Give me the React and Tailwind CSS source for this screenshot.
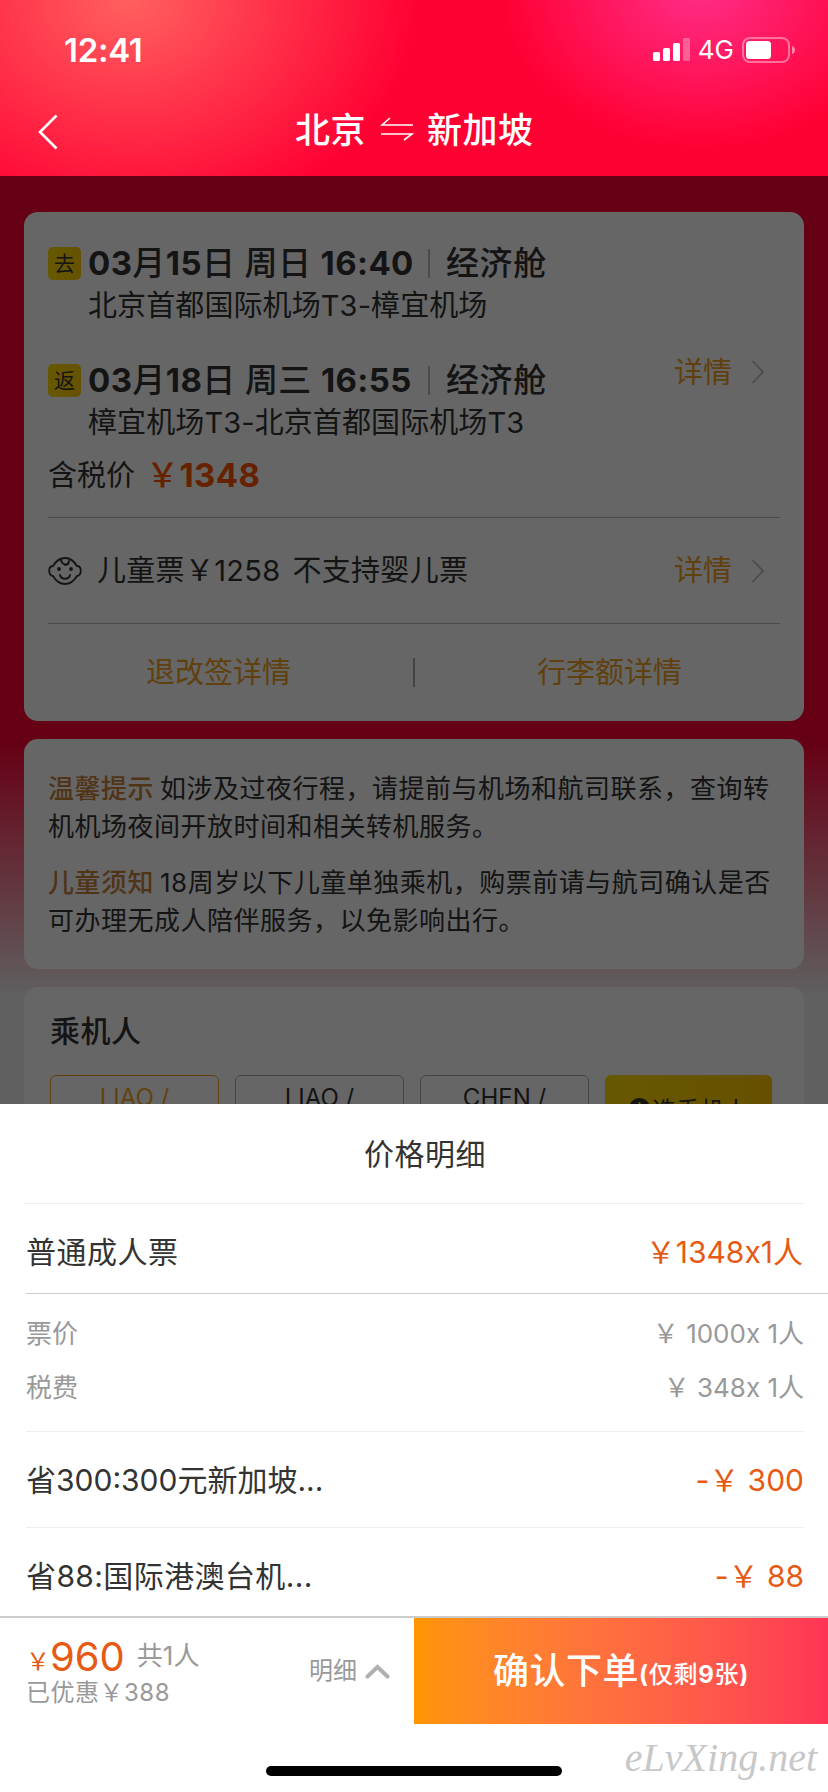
const trips = [
  { tag: "去", date: "03月15日 周日 16:40", cabin: "经济舱", route: "北京首都国际机场T3-樟宜机场" },
  { tag: "返", date: "03月18日 周三 16:55", cabin: "经济舱", route: "樟宜机场T3-北京首都国际机场T3" },
];

// digits are bold, the Chinese characters around them only medium
function Mixed({ text }) {
  return text.split(/([\d:()]+)/).map((part, i) =>
    i % 2 ? (
      <b key={i} className="font-bold">{part}</b>
    ) : (
      part
    )
  );
}

function StatusBar() {
  return (
    <div className="flex h-[100px] items-center justify-between pl-[64px] pr-[32px]">
      <span className="text-[33px] font-semibold leading-none tracking-[-0.3px]">12:41</span>
      <div className="flex items-center">
        <svg width="37" height="24" viewBox="0 0 37 24" fill="#fff">
          <rect x="0" y="14" width="7" height="9" rx="1.5" />
          <rect x="10" y="10" width="7" height="13" rx="1.5" />
          <rect x="20" y="5" width="7" height="18" rx="1.5" />
          <rect x="30" y="0" width="7" height="23" rx="1.5" opacity="0.3" />
        </svg>
        <span className="ml-[8px] text-[26px] leading-none">4G</span>
        <svg className="ml-[8px]" width="54" height="26" viewBox="0 0 54 26">
          <rect x="1" y="1" width="46" height="24" rx="7" fill="none" stroke="#fff" strokeOpacity="0.4" strokeWidth="2" />
          <rect x="4" y="4" width="25" height="18" rx="3.5" fill="#fff" />
          <path d="M50 9c4 1 4 7 0 8z" fill="#fff" fillOpacity="0.5" />
        </svg>
      </div>
    </div>
  );
}

function Header() {
  return (
    <header className="h-[176px] bg-[#ff0033] bg-[radial-gradient(ellipse_290px_230px_at_130px_0px,#ff605f,transparent),radial-gradient(ellipse_200px_160px_at_700px_-10px,#ff2d88,transparent)] text-white">
      <StatusBar />
      <div className="flex h-[60px] items-center">
        <svg className="ml-[38px] mt-[3px]" width="20" height="36" viewBox="0 0 20 36" fill="none" stroke="#fff" strokeWidth="2.6">
          <path d="M18.5 1.500L2 18l16.500 16.500" />
        </svg>
        <h1 className="ml-[237px] flex items-center text-[35px] font-medium leading-none tracking-[0.5px]">
          北京
          <svg className="ml-[14px] mr-[13px] mt-[-2px]" width="34" height="24" viewBox="0 0 34 24" fill="none" stroke="#fff" strokeWidth="1.6">
            <path d="M33 8H2L10 1M1 17h31l-8 6" />
          </svg>
          新加坡
        </h1>
      </div>
    </header>
  );
}

function Detail() {
  return (
    <span className="flex items-center text-[29px] leading-none text-[#f0a01e]">
      详情
      <svg className="ml-[19px]" width="14" height="24" viewBox="0 0 14 24" fill="none" stroke="#bbb" strokeWidth="1.8">
        <path d="M1.500 1L12 12 1.500 23" />
      </svg>
    </span>
  );
}

function Trip({ tag, date, cabin, route }) {
  return (
    <div className="h-[117px]">
      <div className="flex h-[42px] items-center">
        <span className="flex h-[33px] w-[33px] items-center justify-center rounded-[5px] bg-linear-to-r from-[#ffdd00] to-[#ffcc00] text-[21px] leading-none">{tag}</span>
        <span className="ml-[7px] w-[324px] whitespace-nowrap text-[33px] font-medium leading-none tracking-[0.4px]">
          <Mixed text={date} />
        </span>
        <i className="ml-[16px] mr-[16px] h-[29px] w-[2px] bg-[#bbb]" />
        <span className="text-[33px] font-medium leading-none tracking-[0.6px]">{cabin}</span>
      </div>
      <p className="flex h-[42px] items-center pl-[40px] text-[29px] leading-none tracking-[0.1px]">{route}</p>
    </div>
  );
}

function FlightCard() {
  return (
    <section className="h-[509px] rounded-[14px] bg-white px-[24px] pt-[30px]">
      <div className="flex h-[276px] border-b border-[#bbb]">
        <div className="flex-1">
          {trips.map((t) => (
            <Trip key={t.tag} {...t} />
          ))}
          <div className="-mt-[22px] flex h-[42px] items-center text-[29px] leading-none">
            含税价
            <span className="ml-[11px] text-[33px] font-medium tracking-[0.4px] text-[#ff5500]">
              <Mixed text="￥1348" />
            </span>
          </div>
        </div>
        <div className="mt-[113px] flex h-[34px] items-center pr-[15px]">
          <Detail />
        </div>
      </div>
      <div className="flex h-[106px] items-center justify-between border-b border-[#bbb] pr-[15px]">
        <div className="flex items-center text-[29px] leading-none tracking-[0.3px]">
          <svg className="mr-[15px]" width="34" height="28" viewBox="0 0 34 28" fill="none" stroke="#333" strokeWidth="1.8" strokeLinecap="round">
            <path d="M5 9C8 4 12 1 17 1s9 3 12 8c5 0 5 9 0 10-3 5-7 8-12 8s-9-3-12-8C0 18 0 9 5 9z" />
            <path d="M13 2c0 5 5 7 7 4M17 8c3 0 4-2 4-4" />
            <path d="M12 18c1 5 9 5 10 0" />
            <circle cx="11" cy="12" r="1" fill="#333" />
            <circle cx="23" cy="12" r="1" fill="#333" />
          </svg>
          儿童票￥1258
          <span className="ml-[12px]">不支持婴儿票</span>
        </div>
        <Detail />
      </div>
      <div className="flex h-[97px] items-center text-[29px] leading-none text-[#f0a01e]">
        <span className="flex-1 pr-[24px] text-center">退改签详情</span>
        <i className="h-[29px] w-[2px] bg-[#aaa]" />
        <span className="flex-1 pl-[24px] text-center">行李额详情</span>
      </div>
    </section>
  );
}

function Tips() {
  return (
    <section className="mt-[18px] h-[230px] whitespace-nowrap rounded-[14px] bg-white px-[24px] pt-[31px] text-[26px] leading-[38px] tracking-[0.5px]">
      <p>
        <b className="mr-[6px] font-medium text-[#c8823c]">温馨提示</b>
        如涉及过夜行程，请提前与机场和航司联系，查询转
        <br />
        机机场夜间开放时间和相关转机服务。
      </p>
      <p className="mt-[18px]">
        <b className="mr-[6px] font-medium text-[#c8823c]">儿童须知</b>
        18周岁以下儿童单独乘机，购票前请与航司确认是否
        <br />
        可办理无成人陪伴服务，以免影响出行。
      </p>
    </section>
  );
}

function Passengers() {
  return (
    <section className="mt-[18px] h-[300px] rounded-[14px] bg-white px-[26px] pt-[24px]">
      <h2 className="flex h-[40px] items-center text-[30px] font-medium leading-none tracking-[0.5px]">乘机人</h2>
      <div className="mt-[24px] flex gap-[16px] pr-[6px] text-center text-[24px] leading-[44px]">
        <div className="h-[100px] flex-1 rounded-[6px] border border-[#f5a623] text-[#f5a623]">LIAO /</div>
        <div className="h-[100px] flex-1 rounded-[6px] border border-[#aaa]">LIAO /</div>
        <div className="h-[100px] flex-1 rounded-[6px] border border-[#aaa]">CHEN /</div>
        <div className="flex h-[100px] flex-1 items-start justify-center gap-[2px] rounded-[6px] bg-linear-to-r from-[#ffdd00] to-[#ffc800] pt-[23px] text-[24px] leading-[26px]">
          <svg width="21" height="21" viewBox="0 0 21 21">
            <circle cx="10.500" cy="10.500" r="10.500" fill="#333" />
            <path d="M10.500 4v13M4 10.500h13" stroke="#ffdd00" strokeWidth="2" />
          </svg>
          选乘机人
        </div>
      </div>
    </section>
  );
}

function PriceSheet() {
  return (
    <section className="h-[512px] overflow-hidden bg-white text-[30px] leading-none">
      <h2 className="mx-[24px] flex h-[100px] items-center justify-center border-b border-[#eee] pl-[22px] tracking-[0.5px]">价格明细</h2>
      <div className="ml-[26px] flex h-[90px] items-center justify-between border-b border-[#ccc] pr-[25px] pt-[6px]">
        <span className="tracking-[0.5px]">普通成人票</span>
        <span className="text-[#e65a14] [font-feature-settings:'calt'_0]">￥1348x1人</span>
      </div>
      <div className="ml-[26px] mr-[24px] flex h-[138px] flex-col border-b border-[#eee] pt-[13px] text-[26px] text-[#999] [font-feature-settings:'calt'_0]">
        <div className="flex h-[54px] items-center justify-between">
          <span>票价</span>
          <span>￥ 1000x 1人</span>
        </div>
        <div className="flex h-[54px] items-center justify-between">
          <span>税费</span>
          <span>￥ 348x 1人</span>
        </div>
      </div>
      <div className="ml-[26px] mr-[24px] flex h-[96px] items-center justify-between border-b border-[#eee]">
        <span>省300:300元新加坡...</span>
        <span className="text-[#e65a14]">-￥ 300</span>
      </div>
      <div className="ml-[26px] mr-[24px] flex h-[96px] items-center justify-between">
        <span className="tracking-[0.4px]">省88:国际港澳台机...</span>
        <span className="text-[#e65a14]">-￥ 88</span>
      </div>
    </section>
  );
}

function BottomBar() {
  return (
    <footer className="h-[176px] bg-white">
      <div className="flex h-[108px] border-t-2 border-[#ccc] leading-none text-[#999]">
        <div className="flex w-[414px] items-center justify-between pl-[26px] pr-[24px]">
          <div>
            <div className="flex h-[44px] items-start">
              <span className="mt-[13px] text-[24px] text-[#e65a14]">￥</span>
              <span className="text-[40px] text-[#e65a14]">960</span>
              <span className="ml-[12px] mt-[6px] text-[26px]">共1人</span>
            </div>
            <div className="text-[24px] tracking-[0.5px]">已优惠￥388</div>
          </div>
          <div className="flex items-center text-[24px]">
            明细
            <svg className="ml-[8px]" width="25" height="15" viewBox="0 0 25 15" fill="none" stroke="#b0b0b0" strokeWidth="4" strokeLinecap="round">
              <path d="M2.500 12.500l10-9.500 10 9.500" />
            </svg>
          </div>
        </div>
        <button className="flex flex-1 items-center justify-center bg-linear-to-r from-[#ff9500] to-[#ff3355] font-medium text-white">
          <span className="text-[36px] tracking-[0.5px]">确认下单</span>
          <span className="mt-[7px] text-[24px] tracking-[0.7px]">
            <Mixed text="(仅剩9张)" />
          </span>
        </button>
      </div>
      <div className="relative flex justify-center pt-[42px]">
        <div className="h-[10px] w-[296px] rounded-full bg-black" />
        <span className="absolute right-[11px] top-[14px] font-['Liberation_Serif',serif] text-[40px] italic leading-none text-[#c8c8c8]">eLvXing.net</span>
      </div>
    </footer>
  );
}

export default function App() {
  return (
    <div className="flex h-[1792px] w-[828px] flex-col overflow-hidden bg-white font-[Inter,'Noto_Sans_CJK_SC',sans-serif] text-[#333]">
      <Header />
      <main className="relative h-[928px] overflow-hidden bg-[linear-gradient(#ff0033_0px,#ff0033_564px,#f0f0f0_822px)] px-[24px] pt-[36px]">
        <FlightCard />
        <Tips />
        <Passengers />
        <div className="absolute inset-0 bg-black/60" />
      </main>
      <PriceSheet />
      <BottomBar />
    </div>
  );
}
